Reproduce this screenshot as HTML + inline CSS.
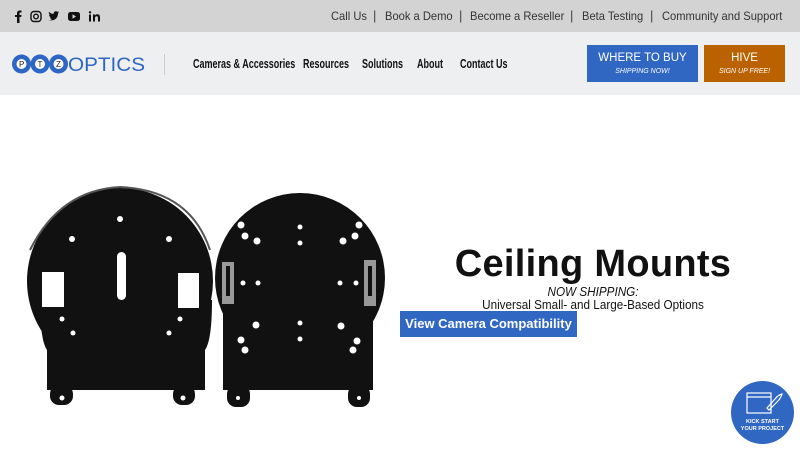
<!DOCTYPE html>
<html><head><meta charset="utf-8"><style>
*{margin:0;padding:0;box-sizing:border-box}
body{width:800px;height:450px;overflow:hidden;background:#fff;font-family:"Liberation Sans",sans-serif;position:relative}
.top{position:absolute;left:0;top:0;width:800px;height:32px;background:#d3d3d3}
.top .lk{position:absolute;top:9px;font-size:12px;color:#333;white-space:nowrap;transform-origin:left top;transform:scaleX(.93)}
.sep{position:absolute;top:8px;font-size:13px;color:#444}
.nav{position:absolute;left:0;top:32px;width:800px;height:63px;background:#eeeff1}
.nl{position:absolute;top:57px;font-size:12.5px;color:#111;white-space:nowrap;transform-origin:left top;transform:scaleX(.72);font-weight:bold}
.btn{position:absolute;top:45px;height:37px;color:#fff;text-align:center}
.btn b{display:block;font-weight:normal;font-size:11.5px;margin-top:7px}
.btn i{display:block;font-size:7px;margin-top:4px}
</style></head><body>
<div class="top">
<svg style="position:absolute;left:14px;top:10px" width="90" height="13" viewBox="0 0 90 13">
<path d="M3 13V7H1V5h2V3.5C3 1.5 4 0.5 6 0.5h1.5v2H6.3c-.6 0-.8.3-.8.9V5h2l-.3 2H5.5v6z" fill="#111"/>
<rect x="17" y="1.5" width="10" height="10" rx="3" fill="none" stroke="#111" stroke-width="1.4"/><circle cx="22" cy="6.5" r="2.3" fill="none" stroke="#111" stroke-width="1.4"/>
<path d="M35 10c4 1.5 9-1 9-6.5l1.2-1.3-1.4.4.9-1.3-1.5.5C42 .6 39.5 1.5 39.5 4 37.5 4 36 3 35 1.8c-.5 1.3 0 2.6 1 3.3-.5 0-1-.2-1-.3 0 1.3 1 2.3 2 2.5-.4.2-1 .2-1.3 0 .3 1 1.3 1.7 2.3 1.8-1 .8-2.4 1.1-3 .9z" fill="#111"/>
<rect x="54" y="2" width="12" height="9" rx="2.5" fill="#111"/><path d="M58.5 4.3v4.4l3.5-2.2z" fill="#d3d3d3"/>
<rect x="75" y="4.5" width="2" height="7" fill="#111"/><circle cx="76" cy="2.3" r="1.2" fill="#111"/><path d="M79 4.5h2v1c.5-.8 1.4-1.2 2.4-1.2 2 0 2.6 1.3 2.6 3.2v4h-2V8c0-1-.2-1.8-1.3-1.8S81 7 81 8v3.5h-2z" fill="#111"/>
</svg>
<span class="lk" style="left:331px">Call Us</span><span class="sep" style="left:373px">|</span>
<span class="lk" style="left:385px">Book a Demo</span><span class="sep" style="left:459px">|</span>
<span class="lk" style="left:470px">Become a Reseller</span><span class="sep" style="left:570px">|</span>
<span class="lk" style="left:582px">Beta Testing</span><span class="sep" style="left:650px">|</span>
<span class="lk" style="left:662px">Community and Support</span>
</div>
<div class="nav">
<svg style="position:absolute;left:12px;top:22px" width="135" height="20" viewBox="0 0 135 20">
<g fill="#2e66c4"><circle cx="9.5" cy="10" r="9.5"/><circle cx="28" cy="10" r="9.5"/><circle cx="46.5" cy="10" r="9.5"/></g>
<g fill="#fff"><circle cx="9.5" cy="10" r="5"/><circle cx="28" cy="10" r="5"/><circle cx="46.5" cy="10" r="5"/></g>
<text x="7" y="13" font-size="8" font-family="Liberation Sans" fill="#222">P</text>
<text x="25.5" y="13" font-size="8" font-family="Liberation Sans" fill="#222">T</text>
<text x="44" y="13" font-size="8" font-family="Liberation Sans" fill="#222">Z</text>
<text x="56" y="17" font-size="19" font-family="Liberation Sans" fill="#2e66c4" textLength="77" lengthAdjust="spacingAndGlyphs">OPTICS</text>
</svg>
<div style="position:absolute;left:164px;top:22px;width:1px;height:21px;background:#ccc"></div>
</div>
<span class="nl" style="left:193px">Cameras &amp; Accessories</span>
<span class="nl" style="left:303px">Resources</span>
<span class="nl" style="left:362px">Solutions</span>
<span class="nl" style="left:417px">About</span>
<span class="nl" style="left:460px">Contact Us</span>
<div class="btn" style="left:587px;width:111px;background:#2f67c2"><b>WHERE TO BUY</b><i>SHIPPING NOW!</i></div>
<div class="btn" style="left:704px;width:81px;background:#bb6200"><b>HIVE</b><i>SIGN UP FREE!</i></div>

<svg style="position:absolute;left:0;top:180px" width="400" height="240" viewBox="0 180 400 240">
<g fill="#111">
<circle cx="120" cy="281" r="93"/>
<path d="M40 300 Q40 340 47 350 L47 390 L205 390 L205 350 Q212 340 212 300Z"/>
<rect x="50" y="385" width="23" height="20" rx="9"/><rect x="173" y="385" width="22" height="20" rx="9"/>
<circle cx="300" cy="278" r="85"/>
<rect x="223" y="262" width="150" height="128"/>
<rect x="227" y="385" width="23" height="22" rx="9"/><rect x="348" y="385" width="22" height="22" rx="9"/>
</g>
<path d="M30 250 Q60 190 120 187 Q190 190 210 250" fill="none" stroke="#555" stroke-width="2"/>
<g fill="#fff">
<rect x="117" y="252" width="9" height="48" rx="4.5"/>
<rect x="42" y="272" width="22" height="35"/><rect x="178" y="273" width="21" height="35"/>
<circle cx="120" cy="219" r="3"/><circle cx="72" cy="239" r="3"/><circle cx="169" cy="239" r="3"/>
<circle cx="62" cy="319" r="2.5"/><circle cx="180" cy="319" r="2.5"/><circle cx="73" cy="333" r="2.5"/><circle cx="169" cy="333" r="2.5"/>
<circle cx="62" cy="398" r="2.5"/><circle cx="183" cy="398" r="2.5"/><circle cx="238" cy="398" r="2"/><circle cx="359" cy="398" r="2"/>
<circle cx="241" cy="225" r="3.5"/><circle cx="245" cy="236" r="3.5"/><circle cx="257" cy="241" r="3.5"/><circle cx="300" cy="227" r="2.5"/><circle cx="300" cy="243" r="2.5"/>
<circle cx="359" cy="225" r="3.5"/><circle cx="355" cy="236" r="3.5"/><circle cx="343" cy="241" r="3.5"/>
<circle cx="243" cy="283" r="2.5"/><circle cx="258" cy="283" r="2.5"/><circle cx="340" cy="283" r="2.5"/><circle cx="356" cy="283" r="2.5"/>
<circle cx="256" cy="325" r="3.5"/><circle cx="300" cy="323" r="2.5"/><circle cx="341" cy="326" r="3.5"/><circle cx="300" cy="339" r="2.5"/>
<circle cx="241" cy="340" r="3.5"/><circle cx="245" cy="350" r="3.5"/><circle cx="357" cy="341" r="3.5"/><circle cx="353" cy="350" r="3.5"/>
</g>
<g fill="#999"><rect x="222" y="262" width="12" height="42"/><rect x="364" y="260" width="12" height="46"/></g>
<g fill="#111"><rect x="226" y="266" width="4" height="30"/><rect x="368" y="266" width="4" height="30"/></g>
</svg>

<div style="position:absolute;left:420px;top:243px;width:346px;text-align:center;font-size:38px;font-weight:bold;color:#111;letter-spacing:.3px">Ceiling Mounts</div>
<div style="position:absolute;left:420px;top:284px;width:346px;text-align:center;font-size:13px;font-style:italic;color:#111;transform:scaleX(.9)">NOW SHIPPING:</div>
<div style="position:absolute;left:420px;top:297px;width:346px;text-align:center;font-size:13px;color:#111;transform:scaleX(.9)">Universal Small- and Large-Based Options</div>
<div style="position:absolute;left:400px;top:311px;width:177px;height:26px;background:#2f67c2;color:#fff;font-size:13px;font-weight:bold;text-align:center;line-height:26px">View Camera Compatibility</div>

<div style="position:absolute;left:731px;top:381px;width:63px;height:63px;border-radius:50%;background:#2f67c2"></div>
<svg style="position:absolute;left:731px;top:381px" width="63" height="63" viewBox="0 0 63 63">
<rect x="16" y="12" width="24" height="20" fill="none" stroke="#fff" stroke-width="1.2"/><line x1="16" y1="16" x2="40" y2="16" stroke="#fff" stroke-width="1.2"/>
<path d="M36 27 L44 18 Q47 14 51 13 Q50 17 46 21 L38 29Z" fill="none" stroke="#fff" stroke-width="1.2"/>
<text x="31.5" y="42" font-size="5.5" font-weight="bold" fill="#fff" text-anchor="middle" font-family="Liberation Sans">KICK START</text>
<text x="31.5" y="49" font-size="5.5" font-weight="bold" fill="#fff" text-anchor="middle" font-family="Liberation Sans">YOUR PROJECT</text>
</svg>
</body></html>
